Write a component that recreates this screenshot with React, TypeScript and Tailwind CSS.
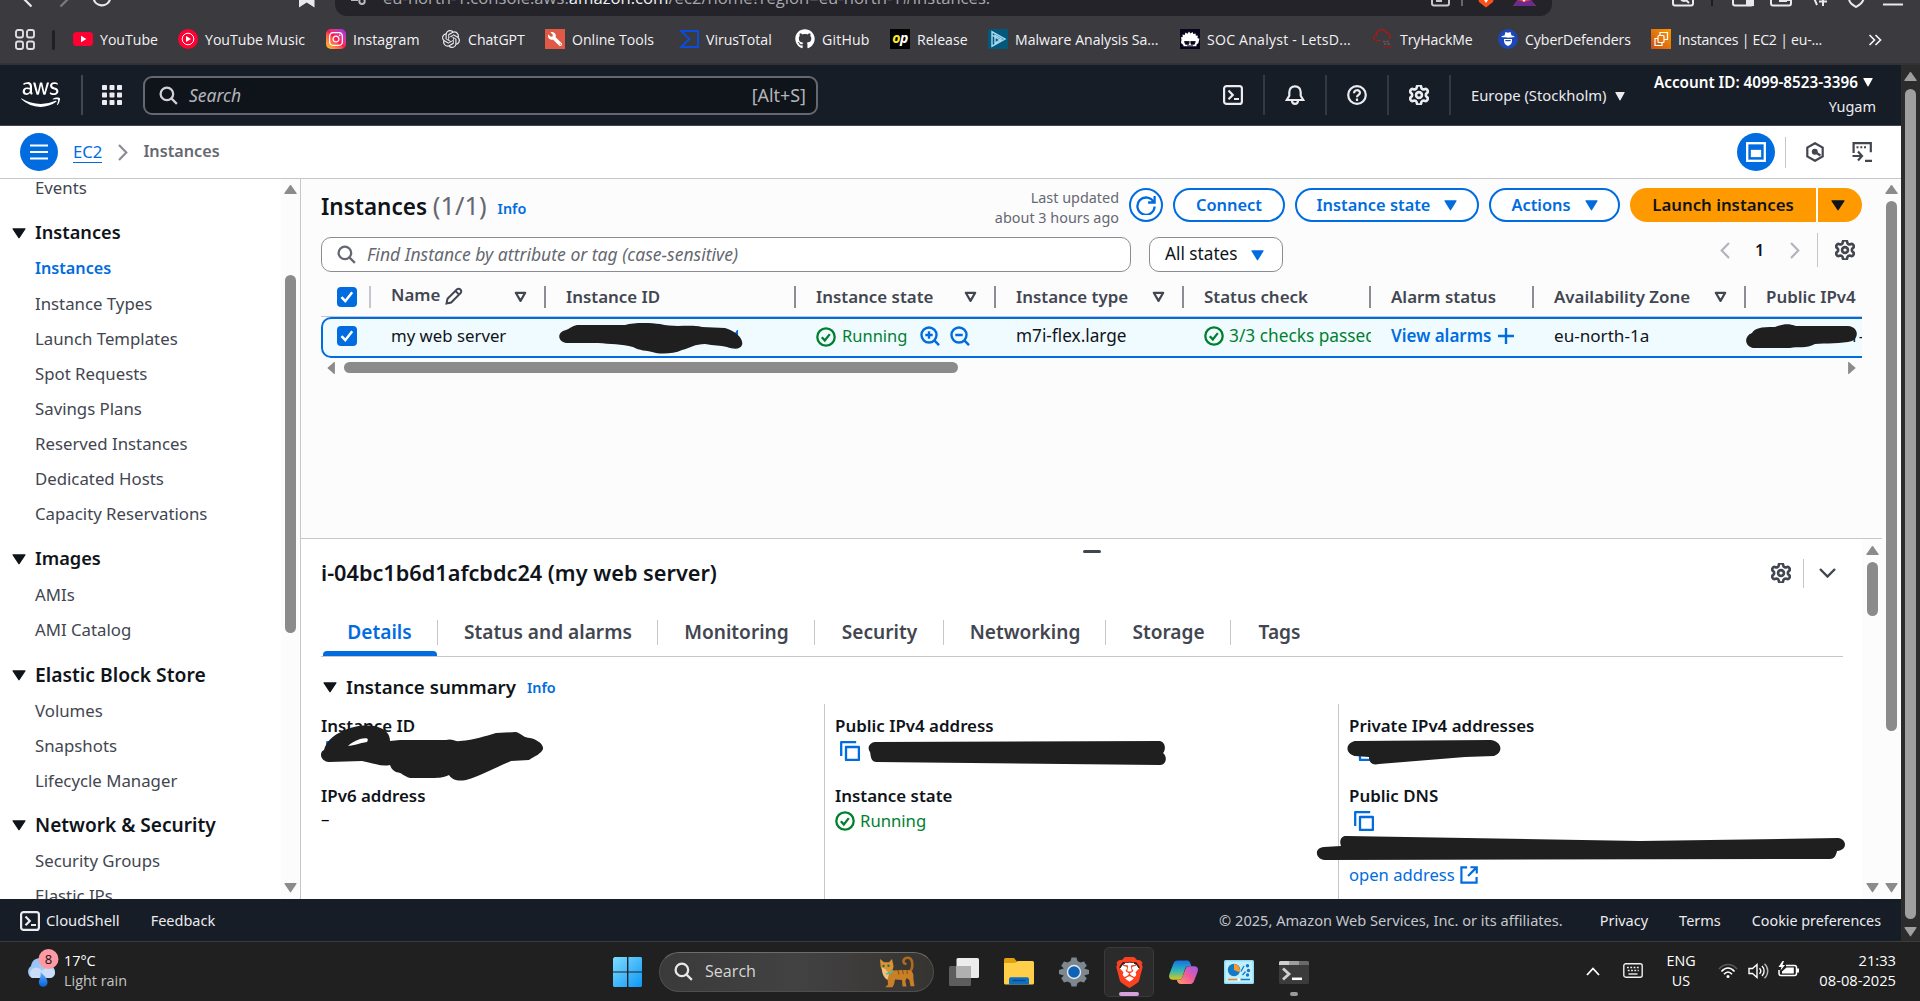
import React from 'react';
import { Settings } from 'lucide-react';
import { FaAws, FaWrench, FaGithub, FaInstagram } from 'react-icons/fa';
import { SiOpenai, SiBrave } from 'react-icons/si';

const AWS_FONT = "font-['Noto_Sans',sans-serif]";
const WIN_FONT = "font-['Open_Sans',sans-serif]";
const INK = '#1f1f1f';

/* ---------- shared bits ---------- */

function Tri({ className = '', dir = 'down' }: { className?: string; dir?: 'up' | 'down' | 'left' | 'right' }) {
  const d = {
    down: 'M1 1.2h10a.6.6 0 0 1 .5 1L6.5 11a.6.6 0 0 1-1 0L.5 2.2a.6.6 0 0 1 .5-1z',
    up: 'M1 11h10a.8.8 0 0 0 .6-1.2L6.7 1.6a.9.9 0 0 0-1.4 0L.4 9.8A.8.8 0 0 0 1 11z',
    left: 'M9.5.5v11a.6.6 0 0 1-1 .4L1 6.5a.6.6 0 0 1 0-1L8.500 .1a.6.6 0 0 1 1 .4z',
    right: 'M2.500.5v11a.6.6 0 0 0 1 .4L11 6.500a.6.6 0 0 0 0-1L3.500.1a.6.6 0 0 0-1 .4z',
  }[dir];
  return (
    <svg viewBox="0 0 12 12" preserveAspectRatio="none" className={`shrink-0 ${className}`} fill="currentColor">
      <path d={d} />
    </svg>
  );
}

function SortTri({ className = '' }: { className?: string }) {
  return (
    <svg viewBox="0 0 13 12" className={`h-3 w-[13px] shrink-0 text-[#424650] ${className}`} fill="none" stroke="currentColor" strokeWidth="2.2" strokeLinejoin="round">
      <path d="M1.800 1.800h9.400L6.500 9.900z" />
    </svg>
  );
}

function SearchIcon({ className = '' }: { className?: string }) {
  return (
    <svg viewBox="0 0 20 20" className={`shrink-0 ${className}`} fill="none" stroke="currentColor" strokeWidth="2.4">
      <circle cx="8.300" cy="8.300" r="6.600" />
      <path d="M13 13l5.800 5.800" />
    </svg>
  );
}

function Gear({ className = '' }: { className?: string }) {
  return (
    <svg viewBox="0 0 20 20" className={`shrink-0 ${className}`} fill="none" stroke="currentColor">
      <g transform="translate(-1.700 -1.700) scale(.975)">
        <Settings size={24} strokeWidth={2.700} />
      </g>
    </svg>
  );
}

function ShellIcon({ className = '' }: { className?: string }) {
  return (
    <svg viewBox="0 0 20 20" className={`size-5 shrink-0 ${className}`} fill="none" stroke="currentColor" strokeWidth="2.200">
      <rect x="1.100" y="1.100" width="17.800" height="17.800" rx="2.500" />
      <path d="M5.500 5.500l4.300 4.400-4.300 4.400M11 14h5" />
    </svg>
  );
}

function CheckBox() {
  return (
    <span className="flex size-5 shrink-0 items-center justify-center rounded-[4px] bg-[#006ce0]">
      <svg viewBox="0 0 20 20" className="size-5" fill="none" stroke="#fff" strokeWidth="2.500">
        <path d="M4.500 10.200l3.800 4L15.200 5.300" />
      </svg>
    </span>
  );
}

function OkIcon() {
  return (
    <svg viewBox="0 0 20 20" className="size-5 shrink-0" fill="none" stroke="currentColor" strokeWidth="2.300">
      <circle cx="10" cy="10" r="8.700" />
      <path d="M5.800 10.200l3 3.200 5-6.300" />
    </svg>
  );
}

function ZoomIcon({ plus = false }: { plus?: boolean }) {
  return (
    <svg viewBox="0 0 20 20" className="size-5 shrink-0 text-[#006ce0]" fill="none" stroke="currentColor" strokeWidth="2.400">
      <circle cx="9" cy="9" r="7.500" />
      <path d="M14.300 14.300l4.700 4.900M5.300 9h7.400" />
      {plus && <path d="M9 5.300v7.400" />}
    </svg>
  );
}

function CopyIcon() {
  return (
    <svg viewBox="0 0 20 20" className="size-5 shrink-0 text-[#006ce0]" fill="none" stroke="currentColor" strokeWidth="2.300" strokeLinejoin="round">
      <path d="M1.200 15V1.200h15" />
      <rect x="6" y="6" width="12.900" height="12.900" />
    </svg>
  );
}

/* Vertical scrollbar: arrow, thumb placed by the flow, arrow at the foot. */
function VScroll({ className, thumb, color = 'text-[#8b8b8b]' }: { className: string; thumb: string; color?: string }) {
  return (
    <div className={`flex shrink-0 flex-col items-center ${color} ${className}`}>
      <Tri dir="up" className="h-[11px] w-[13px]" />
      <div className={`w-[11px] rounded-full bg-current ${thumb}`} />
      <Tri dir="down" className="mt-auto h-[11px] w-[13px]" />
    </div>
  );
}

/* ---------- browser chrome ---------- */

function UrlBar() {
  return (
    <div className={`flex h-4 shrink-0 overflow-hidden bg-[#3b3a3f] text-[#e9e8ec] ${WIN_FONT}`}>
      <svg viewBox="0 0 335 16" className="h-4 w-[335px]" fill="none" stroke="currentColor" strokeWidth="2.200">
        <path d="M24 -1l7.500 7.500" />
        <path d="M68 -1l-7.500 7.500" stroke="#7b7a80" />
        <path d="M93.500 -2a8.500 8.500 0 0 0 16.500 1.500" />
        <path d="M299 -4h15.500V7.500L306.700 2.500 299 7.500z" fill="currentColor" stroke="none" />
      </svg>
      <div className="flex h-4 w-[1217px] items-start rounded-b-xl bg-[#242329] pl-4">
        <svg viewBox="0 0 16 16" className="h-4 w-4" fill="none" stroke="#b9b8bd" strokeWidth="2">
          <path d="M-1 0h8" />
          <circle cx="11" cy="1.200" r="2.700" />
        </svg>
        <div className="-mt-[14px] ml-4 w-[1048px] whitespace-nowrap text-[16.650px] leading-[24px] text-[#a9a8ae]">
          eu-north-1.console.aws.<span className="text-[#f2f2f4]">amazon.com</span>/ec2/home?region=eu-north-1#Instances:
        </div>
        <svg viewBox="0 0 112 16" className="h-4 w-[112px]" fill="none" stroke="#c9c8cd" strokeWidth="2">
          <path d="M1 0v3.500a2 2 0 0 0 2 2h13a2 2 0 0 0 2-2V0M5 1h6" />
          <path d="M31 0v6" stroke="#68676d" />
          <path d="M46 -6h18l-2 8-7 5.500L48 2z" fill="#fb4f1c" stroke="none" />
          <path d="M53 0l2 3 2-3z" fill="#fff" stroke="none" />
          <path d="M93 -8l12 14H82z" fill="#fb3f3f" stroke="none" />
          <path d="M82 6l5-6 6 2 7-2 5 6z" fill="#6a2c8c" stroke="none" />
          <path d="M90 -2h6l-3 4z" fill="#fff" stroke="none" />
        </svg>
      </div>
      <svg viewBox="0 0 368 16" className="h-4 w-[368px]" fill="none" stroke="currentColor" strokeWidth="2">
        <path d="M121 0v3.500a2 2 0 0 0 2 2h16a2 2 0 0 0 2-2V0M129 -1a3 3 0 0 0 5 1l3 3" />
        <path d="M160 0v6" stroke="#1c1b1f" />
        <path d="M181 0v3.500a2 2 0 0 0 2 2h16a2 2 0 0 0 2-2V0" />
        <path d="M195 0h6v5h-6z" fill="currentColor" />
        <path d="M219 0v3.500a2 2 0 0 0 2 2h16a2 2 0 0 0 2-2V0h-5v1h-7" />
        <path d="M262 -2l3 7M271 -2v8M267 1.500h8" />
        <path d="M297 -1c.5 4 3 5.500 7 8 4-2.500 7-4 7.500-8" />
        <path d="M331 4.500h20" />
      </svg>
    </div>
  );
}

const bookmarks: { label: string; w: string; icon: React.ReactNode }[] = [
  { label: 'YouTube', w: 'w-[105px]', icon: (
    <svg viewBox="0 0 20 20" className="size-5"><rect y="3" width="20" height="14" rx="3.500" fill="#ff0033" /><path d="M8 6.800v6.400l5.300-3.200z" fill="#fff" /></svg>) },
  { label: 'YouTube Music', w: 'w-[148px]', icon: (
    <svg viewBox="0 0 20 20" className="size-5"><circle cx="10" cy="10" r="10" fill="#ff0033" /><circle cx="10" cy="10" r="5.800" fill="none" stroke="#fff" strokeWidth="1" /><path d="M8 6.900v6.200l5-3.100z" fill="#fff" /></svg>) },
  { label: 'Instagram', w: 'w-[115px]', icon: (
    <span className="flex size-5 items-center justify-center rounded-[5px] bg-linear-to-tr from-[#ffc800] via-[#ff1450] to-[#9a10f0] text-white"><FaInstagram size={16} /></span>) },
  { label: 'ChatGPT', w: 'w-[104px]', icon: <SiOpenai size={18} color="#e8e8ea" /> },
  { label: 'Online Tools', w: 'w-[134px]', icon: (
    <span className="flex size-5 items-center justify-center bg-[#e05846] text-white"><FaWrench size={14} className="-scale-x-100" /></span>) },
  { label: 'VirusTotal', w: 'w-[116px]', icon: (
    <svg viewBox="0 0 20 20" className="size-5" fill="none" stroke="#0b4ddb" strokeWidth="2"><path d="M2.200 2h16.800v16H2.200l8.300-8z" /></svg>) },
  { label: 'GitHub', w: 'w-[95px] tracking-[0.200px]', icon: <FaGithub size={20} color="#fff" /> },
  { label: 'Release', w: 'w-[98px]', icon: (
    <span className="flex size-5 items-center justify-center bg-black pb-0.5 text-[14px] font-bold leading-none tracking-[-0.5px] text-white italic"><span className="text-[#ffe924]">o</span>p</span>) },
  { label: 'Malware Analysis Sa...', w: 'w-[192px]', icon: (
    <svg viewBox="0 0 20 20" className="size-5" fill="none" stroke="#a8dcf2" strokeWidth="1.400"><rect width="20" height="20" rx="2" fill="#04587c" stroke="none" /><path d="M4 2.800v14.400L17 10zM7 6.500v7.500l6.500-4zM4 6l9.500 6" /></svg>) },
  { label: 'SOC Analyst - LetsD...', w: 'w-[193px] tracking-[0.220px]', icon: (
    <svg viewBox="0 0 20 20" className="size-5"><rect width="20" height="20" fill="#070519" /><path d="M1 14l.5-4L.7 8.500l2-.6L2.500 5.500l2.200.4L5.500 3.500l2 1.300L9 2.500l1.500 2 2-1.500.8 2 2.300-.6.2 2.200 2.200.2-.6 2.200 2 .8-1 4.200-2 1.800v1.500h-13V16z" fill="#fff" /><path d="M4.500 12.500h4.300v2.800H5.500zM11 12.500h4.300l-1 2.800H11zM8.500 13h3M7 16.800h6" fill="#070519" stroke="#070519" strokeWidth=".8" /></svg>) },
  { label: 'TryHackMe', w: 'w-[125px] tracking-[-0.100px]', icon: (
    <svg viewBox="0 0 20 20" className="size-5" fill="none" stroke="#c11111" strokeWidth="1.200"><path d="M8 11.500H3.500C-.5 10.500.5 6 3.500 6 3.500 0 11.500-1 13 3.500c4 0 5.500 5 2.500 6.500" /><path d="M10 12.500h7M11 15h6" stroke="#5c5a60" strokeDasharray="2.500 1" strokeWidth="1.500" /><path d="M10.500 18h8" stroke="#8a1c22" strokeDasharray="2 1" strokeWidth="1.800" /></svg>) },
  { label: 'CyberDefenders', w: 'w-[153px] tracking-[-0.050px]', icon: (
    <svg viewBox="0 0 20 20" className="size-5"><circle cx="10" cy="10" r="10" fill="#1c47b8" /><path d="M6.500 6.500l1-3.500 2.500.7 2.500-.7 1 3.500c2 .3 3 .7 3 1.300 0 1.100-13 1.100-13 0 0-.6 1-1 3-1.300z" fill="#fff" /><path d="M6 10h8v1.800c0 3-2 4.700-4 5.200-2-.5-4-2.200-4-5.200z" fill="#fff" /><path d="M7.300 11h5.400v1.200H7.300z" fill="#1c47b8" /></svg>) },
  { label: 'Instances | EC2 | eu-...', w: 'w-[217px] tracking-[-0.220px]', icon: (
    <svg viewBox="0 0 20 20" className="size-5" fill="none" stroke="#fff" strokeWidth="1.200"><defs><linearGradient id="ec2" x1="0" y1="1" x2="1" y2="0"><stop offset="0" stopColor="#c8511b" /><stop offset="1" stopColor="#ff9900" /></linearGradient></defs><rect width="20" height="20" fill="url(#ec2)" stroke="none" /><path d="M7 9.500H4v7h7v-3M9 6V3.500h7.500v7H13" /><rect x="7" y="6.500" width="6" height="7" rx="1" /></svg>) },
];

function BookmarkBar() {
  return (
    <div className={`flex h-[49px] shrink-0 items-center border-b-2 border-[#323136] bg-[#3b3a3f] pl-[15px] text-[14.100px] text-[#f3f3f5] ${WIN_FONT}`}>
      <svg viewBox="0 0 20 21" className="h-[21px] w-5" fill="none" stroke="#dedde2" strokeWidth="1.900">
        <rect x="1" y="1" width="7" height="7.500" rx="2" />
        <rect x="12" y="1" width="7" height="7.500" rx="2" />
        <rect x="1" y="12.500" width="7" height="7.500" rx="2" />
        <rect x="12" y="12.500" width="7" height="7.500" rx="2" />
      </svg>
      <span className="mr-[18px] ml-[17px] h-5 w-[3px] rounded bg-[#202024]" />
      {bookmarks.map((b) => (
        <div key={b.label} className={`flex shrink-0 items-center gap-[7px] whitespace-nowrap ${b.w}`}>
          <span className="flex size-5 shrink-0 items-center justify-center">{b.icon}</span>
          {b.label}
        </div>
      ))}
      <svg viewBox="0 0 14 12" className="h-3 w-[14px]" fill="none" stroke="#f3f3f5" strokeWidth="1.700">
        <path d="M1.500 1l5 5-5 5M7.500 1l5 5-5 5" />
      </svg>
    </div>
  );
}

/* ---------- AWS console ---------- */

function ConsoleHeader() {
  return (
    <header className="flex h-[61px] shrink-0 items-center border-b border-[#424650] bg-[#161d26] text-[#ebebf0]">
      <FaAws preserveAspectRatio="none" className="-mt-px ml-[21px] h-[33px] w-[39px] shrink-0 text-white" />
      <span className="ml-[21px] h-10 w-0.5 bg-[#424650]" />
      <svg viewBox="0 0 20 20" className="ml-[19px] size-5 shrink-0" fill="currentColor">
        {[0, 7.500, 15].map((y) => [0, 7.500, 15].map((x) => <rect key={`${x}-${y}`} x={x} y={y} width="5" height="5" rx=".8" />))}
      </svg>
      <div className="ml-[21px] flex h-[39px] w-[675px] items-center rounded-[9px] border-2 border-[#656871] bg-[#0f141a] px-3.5 text-[17.500px] text-[#b4b4bb]">
        <SearchIcon className="size-[19px] text-[#d0d0d6]" />
        <span className="ml-[11px] italic">Search</span>
        <span className="mr-[-4px] ml-auto text-[17.900px]">[Alt+S]</span>
      </div>
      <ShellIcon className="ml-[405px]" />
      <span className="ml-5 h-10 w-0.5 bg-[#333843]" />
      <svg viewBox="0 0 20 20" className="ml-5 size-5" fill="none" stroke="currentColor" strokeWidth="2.200">
        <path d="M10 1.300c-3.600 0-5.700 2.600-5.700 5.900v3.600L1.700 15h16.600l-2.600-4.200V7.200c0-3.300-2.100-5.900-5.700-5.900z" />
        <path d="M7 15.500c0 4.500 6 4.500 6 0" />
      </svg>
      <span className="ml-5 h-10 w-0.5 bg-[#333843]" />
      <svg viewBox="0 0 20 20" className="ml-5 size-5" fill="none" stroke="currentColor" strokeWidth="2.200">
        <circle cx="10" cy="10" r="8.800" />
        <path d="M7 8.300c0-4 6-4 6-.6 0 2-3 2.200-3 4.500M10 13.500V16" />
      </svg>
      <span className="ml-5 h-10 w-0.5 bg-[#333843]" />
      <Gear className="ml-5 size-5" />
      <span className="ml-5 h-10 w-0.5 bg-[#333843]" />
      <div className="ml-5 flex w-[183px] items-center whitespace-nowrap pt-px text-[14.800px]">
        Europe (Stockholm)
        <Tri className="ml-[9px] h-[10px] w-[10px]" />
      </div>
      <div className="mt-[-3px] flex w-[220px] flex-col items-end text-[14.500px] leading-[24px] whitespace-nowrap">
        <div className="flex items-center pr-px text-[15.250px] font-semibold text-white">
          Account ID: 4099-8523-3396
          <Tri className="ml-[5px] h-[10px] w-[10px]" />
        </div>
        <span className="mr-[-2px]">Yugam</span>
      </div>
    </header>
  );
}

function Breadcrumbs() {
  return (
    <div className="flex h-[53px] shrink-0 items-center border-b border-[#c6c6cd] bg-white">
      <span className="ml-5 flex size-[38px] items-center justify-center rounded-full bg-[#006ce0]">
        <svg viewBox="0 0 18 18" className="size-[18px]" stroke="#fff" strokeWidth="2.200"><path d="M0 2.500h18M0 9h18M0 15.500h18" /></svg>
      </span>
      <span className="-mt-px ml-[15px] border-b border-[#006ce0] text-[16.700px] leading-[21px] text-[#006ce0]">EC2</span>
      <svg viewBox="0 0 10 17" className="ml-4 h-[17px] w-[10px]" fill="none" stroke="#8c8c94" strokeWidth="2.200"><path d="M1 1l7.300 7.500L1 16" /></svg>
      <span className="-mt-0.5 ml-[15px] text-[16.200px] font-semibold text-[#656871]">Instances</span>
      <span className="ml-auto flex size-[38px] items-center justify-center rounded-full bg-[#006ce0]">
        <svg viewBox="0 0 20 20" className="size-5" fill="none" stroke="#fff" strokeWidth="2.300"><rect x="1.200" y="1.200" width="17.600" height="17.600" /><rect x="6" y="9" width="8" height="5" fill="#fff" /></svg>
      </span>
      <span className="ml-2.5 h-[31px] w-px bg-[#c6c6cd]" />
      <svg viewBox="0 0 20 20" className="ml-[19px] size-5" fill="none" stroke="#424650" strokeWidth="2.200"><path d="M10 1.200l7.700 4.400v8.800L10 18.800l-7.700-4.400V5.600z" /><circle cx="9.800" cy="9.800" r="1.900" fill="#424650" /><path d="M10 10l5.500 3.500" strokeWidth="2.300" /></svg>
      <svg viewBox="0 0 20 20" className="mr-[29px] ml-[27px] size-5" fill="none" stroke="#424650" strokeWidth="2.200"><path d="M1.600 11V1.200h17.200v9M.5 14h9M6 9.500l4 4.500-4 4.500M13 18.800h7" /><path d="M4.500 5.200h2M8.300 5.200h2M12 5.200h2" strokeWidth="2" /></svg>
    </div>
  );
}

const nav: { head?: string; size?: string; items: string[] }[] = [
  { items: ['Events'] },
  { head: 'Instances', size: 'text-[18.200px]', items: ['Instances', 'Instance Types', 'Launch Templates', 'Spot Requests', 'Savings Plans', 'Reserved Instances', 'Dedicated Hosts', 'Capacity Reservations'] },
  { head: 'Images', size: 'text-[18.200px]', items: ['AMIs', 'AMI Catalog'] },
  { head: 'Elastic Block Store', size: 'text-[19.300px]', items: ['Volumes', 'Snapshots', 'Lifecycle Manager'] },
  { head: 'Network & Security', size: 'text-[19.100px]', items: ['Security Groups', 'Elastic IPs'] },
];

function Sidebar() {
  return (
    <aside className="flex w-[301px] shrink-0 border-r border-[#c6c6cd] bg-white">
      <nav className="h-[720px] flex-1 overflow-hidden whitespace-nowrap">
        <div className="-mt-[9px]">
          {nav.map((g, i) => (
            <div key={i} className={i === 3 ? 'mb-[9px]' : 'mb-2.5'}>
              {g.head && (
                <div className={`flex h-9 items-center pl-3 font-semibold text-[#0f141a] ${g.size}`}>
                  <Tri className="mr-[9px] h-3 w-[14px]" />
                  {g.head}
                </div>
              )}
              {g.items.map((t) => (
                <div key={t} className={t === g.head ? 'flex h-[35px] items-center pl-[35px] text-[16.200px] font-semibold text-[#006ce0]' : 'flex h-[35px] items-center pl-[35px] text-[16.800px] text-[#424650]'}>
                  {t}
                </div>
              ))}
            </div>
          ))}
        </div>
      </nav>
      <VScroll className="w-[19px] bg-[#fcfcfc] pt-[5px] pb-[6px]" thumb="mt-20 h-[358px]" />
    </aside>
  );
}

const btn = 'flex h-[34px] items-center justify-center rounded-full border-2 border-[#006ce0] bg-white text-[16.400px] font-semibold text-[#006ce0] whitespace-nowrap';

const columns: { label: string; sort?: boolean; edit?: boolean }[] = [
  { label: 'Name', sort: true, edit: true },
  { label: 'Instance ID' },
  { label: 'Instance state', sort: true },
  { label: 'Instance type', sort: true },
  { label: 'Status check' },
  { label: 'Alarm status' },
  { label: 'Availability Zone', sort: true },
  { label: 'Public IPv4' },
];

const gridCols = 'grid grid-cols-[50px_175px_250px_200px_188px_187px_163px_212px_116px]';

function InstanceTable() {
  return (
    <div className="relative w-[1541px] overflow-hidden text-[17px] whitespace-nowrap">
      <div className={`${gridCols} h-[45px] items-center border-b border-[#c6c6cd] pt-[5px] text-[16.900px] font-semibold text-[#424650]`}>
        <div className="flex h-[22px] items-center justify-between border-r-2 border-[#c6c6cd] pl-4"><CheckBox /></div>
        {columns.map((c, i) => (
          <div key={c.label} className={`flex h-[22px] items-center pl-5 ${i < 7 ? 'border-r-2 border-[#8c8c94]' : ''}`}>
            <span className={c.edit ? '-mt-[3px]' : ''}>{c.label}</span>
            {c.edit && (
              <svg viewBox="0 0 18 18" className="-mt-px ml-[5px] size-[18px]" fill="none" stroke="currentColor" strokeWidth="2"><path d="M1.500 16.500l1-4.700L12 2.300c2.500-1.800 5.300 1 3.700 3.700L6.200 15.500zM10.500 4l3.600 3.600" /></svg>
            )}
            {c.sort && <SortTri className="mr-[17px] ml-auto" />}
          </div>
        ))}
      </div>
      <div className={`${gridCols} h-[41px] w-[1560px] items-center rounded-[10px] border-2 border-[#006ce0] bg-[#f0fbff] pb-[3px] text-[16.900px] text-[#0f141a]`}>
        <div className="pl-3.5"><CheckBox /></div>
        <div className="pl-[18px] text-[16.800px]">my web server</div>
        <div />
        <div className="mt-px flex items-center pl-[18px] text-[16.500px] text-[#00802f]">
          <OkIcon /><span className="ml-[6px]">Running</span>
          <span className="-mt-px ml-[13px] flex gap-2.5"><ZoomIcon plus /><ZoomIcon /></span>
        </div>
        <div className="pl-[18px] text-[17.200px]">m7i-flex.large</div>
        <div className="flex items-center pl-[18px] text-[#00802f]">
          <OkIcon /><span className="ml-[5px] w-[142px] overflow-hidden text-[17.300px]">3/3 checks passed</span>
        </div>
        <div className="flex items-center pl-[18px] text-[17px] font-semibold text-[#006ce0]">
          View alarms
          <svg viewBox="0 0 16 16" className="ml-[7px] size-4" stroke="currentColor" strokeWidth="2.400"><path d="M0 8h16M8 0v16" /></svg>
        </div>
        <div className="pl-[18px] text-[17.100px]">eu-north-1a</div>
        <div className="pl-[101px]">1-</div>
      </div>
      <svg viewBox="559 322 185 33" className="absolute top-[50px] left-[238px] h-[33px] w-[185px]">
        <path d="M733 336h5v-6h-1z" fill="#006ce0" />
        <path d="M566 330C569 329 572 326 577 325L625 325C635 322 652 323 660 324C675 328 690 324 702 327L725 328C736 331 744 339 742 345C740 350 733 349 727 347C720 345 714 346 705 344C695 344 690 348 682 350C674 354 662 354 656 353C645 350 640 351 633 347C622 344 610 344 598 343L566 343C557 341 557 332 566 330Z" fill={INK} />
      </svg>
      <svg viewBox="1745 322 115 30" className="absolute top-[50px] left-[1424px] h-[30px] w-[115px]">
        <path d="M1752 333C1755 328 1760 327 1775 327C1783 324 1788 323 1796 326L1848 326C1859 327 1859 338 1852 341C1842 344 1825 343 1815 344C1806 349 1798 346 1790 348L1753 348C1744 346 1744 336 1752 333Z" fill={INK} />
      </svg>
    </div>
  );
}

function InstancesPanel() {
  return (
    <section className="h-[359px] w-[1579px] overflow-hidden bg-[#fcfcfd] pl-5">
      <div className="mt-[9px] flex h-[34px] w-[1541px] items-center whitespace-nowrap">
        <h1 className="text-[22.500px] font-semibold text-[#0f141a]">
          Instances <span className="text-[25.400px] font-normal text-[#656871]">(1/1)</span>
        </h1>
        <span className="mt-2 ml-[11px] text-[14.400px] font-semibold text-[#006ce0]">Info</span>
        <div className="mt-[6px] ml-auto text-right text-[14.400px] leading-5 text-[#656871]">Last updated<br />about 3 hours ago</div>
        <span className="ml-[10px] flex size-[34px] items-center justify-center rounded-full border-2 border-[#006ce0] bg-white">
          <svg viewBox="0 0 20 20" className="size-5" fill="none" stroke="#006ce0" strokeWidth="2.300"><path d="M17.800 7.500A8.600 8.600 0 1 0 18.600 11.500M18.600 1v6.500h-6.500" /></svg>
        </span>
        <span className={`ml-2.5 w-[112px] ${btn}`}>Connect</span>
        <span className={`ml-2.5 w-[184px] ${btn}`}>Instance state<Tri className="ml-[14px] h-3 w-[13px]" /></span>
        <span className={`ml-2.5 w-[131px] ${btn}`}>Actions<Tri className="ml-[14px] h-3 w-[13px]" /></span>
        <span className="ml-2.5 flex h-[34px] w-[186px] items-center justify-center rounded-l-full bg-[#ff9900] text-[16.800px] font-semibold text-[#0f141a]">Launch instances</span>
        <span className="ml-0.5 flex h-[34px] w-11 items-center rounded-r-full bg-[#ff9900] pl-[13px] text-[#0f141a]"><Tri className="h-3 w-[14px]" /></span>
      </div>
      <div className="mt-[15px] flex h-[35px] w-[1541px] items-center text-[17px]">
        <div className="flex h-[35px] w-[810px] items-center rounded-[10px] border border-[#8c8c94] bg-white pl-[15px] text-[17.550px] text-[#656871] italic">
          <SearchIcon className="mr-[11px] size-[19px]" />
          Find Instance by attribute or tag (case-sensitive)
        </div>
        <div className="ml-[18px] flex h-[35px] w-[134px] items-center rounded-[10px] border border-[#8c8c94] bg-white pl-[15px] text-[17.200px] text-[#0f141a]">
          <span className="-mt-0.5">All states</span>
          <Tri className="ml-[13px] h-3 w-[13px] text-[#006ce0]" />
        </div>
        <div className="mt-[-9px] ml-auto flex items-center">
          <svg viewBox="0 0 10 17" className="h-[17px] w-[10px]" fill="none" stroke="#b4b4bb" strokeWidth="2.200"><path d="M9 1L1.700 8.500 9 16" /></svg>
          <span className="w-[60px] pr-px text-center text-[16px] font-semibold text-[#0f141a]">1</span>
          <svg viewBox="0 0 10 17" className="h-[17px] w-[10px]" fill="none" stroke="#b4b4bb" strokeWidth="2.200"><path d="M1 1l7.300 7.500L1 16" /></svg>
          <span className="ml-[17px] h-[34px] w-px bg-[#c6c6cd]" />
          <Gear className="mr-[7px] ml-[17px] size-5 text-[#424650]" />
        </div>
      </div>
      <InstanceTable />
      <div className="mt-1 flex h-[11px] w-[1541px] items-center pr-1.5 pl-1.5 text-[#8b8b8b]">
        <Tri dir="left" className="h-3 w-[10px]" />
        <div className="ml-[7px] h-[11px] w-[614px] rounded-full bg-current" />
        <Tri dir="right" className="ml-auto h-3 w-[10px]" />
      </div>
    </section>
  );
}

const tabs: { t: string; w: string }[] = [
  { t: 'Details', w: 'w-[117px]' },
  { t: 'Status and alarms', w: 'w-[220px]' },
  { t: 'Monitoring', w: 'w-[157px]' },
  { t: 'Security', w: 'w-[129px]' },
  { t: 'Networking', w: 'w-[162px]' },
  { t: 'Storage', w: 'w-[125px]' },
  { t: 'Tags', w: 'w-[97px]' },
];

const fieldLabel = 'text-[16.900px] leading-[24px] font-semibold text-[#0f141a]';

function DetailPanel() {
  return (
    <section className="flex h-[361px] w-[1581px] border-t border-[#c6c6cd] bg-white">
      <div className="w-[1561px] overflow-hidden pl-5 whitespace-nowrap">
        <div className="mt-[11px] ml-[762px] h-[3px] w-[18px] rounded bg-[#424650]" />
        <div className="mt-[3px] flex h-[34px] items-center pr-[26px]">
          <h2 className="text-[21.700px] font-semibold text-[#0f141a]">i-04bc1b6d1afcbdc24 (my web server)</h2>
          <Gear className="ml-auto size-5 text-[#424650]" />
          <span className="mx-3 h-[29px] w-px bg-[#c6c6cd]" />
          <svg viewBox="0 0 17 10" className="ml-[3px] h-[10px] w-[17px]" fill="none" stroke="#424650" strokeWidth="2.400"><path d="M1 1l7.500 7.500L16 1" /></svg>
        </div>
        <div className="mt-[18px] flex h-[49px] w-[1522px] items-center border-b border-[#c6c6cd] text-[19.100px] font-semibold text-[#424650]">
          {tabs.map((t, i) => (
            <div key={t.t} className={`relative flex h-[48px] items-center justify-center ${t.w} ${i === 0 ? 'text-[#006ce0]' : ''}`}>
              <span>{t.t}</span>
              {i === 0 && <span className="absolute bottom-0 left-0.5 h-[5px] w-[114px] rounded-t bg-[#006ce0]" />}
              {i < 6 && <span className="absolute right-0 top-3 h-[25px] w-px bg-[#c6c6cd]" />}
            </div>
          ))}
        </div>
        <div className="mt-[17px] flex h-[26px] items-center text-[18.700px] font-semibold text-[#0f141a]">
          <Tri className="mr-[9px] ml-[2px] h-3 w-[14px]" />
          Instance summary
          <span className="mt-0.5 ml-[11px] text-[14.400px] font-semibold text-[#006ce0]">Info</span>
        </div>
        <div className="relative mt-[4px] grid h-[196px] grid-cols-[504px_514px_523px] text-[16.900px]">
          <div className="border-r border-[#c6c6cd] pt-[10px]">
            <div className={fieldLabel}>Instance ID</div>
            <div className="mt-[3px] flex h-5 pl-[5px]"><CopyIcon /></div>
            <div className={`mt-[23px] ${fieldLabel}`}>IPv6 address</div>
            <div className="-mt-0.5 leading-[26px]">–</div>
          </div>
          <div className="border-r border-[#c6c6cd] pt-[10px] pl-[10px]">
            <div className={fieldLabel}>Public IPv4 address</div>
            <div className="mt-[3px] flex h-5 pl-[5px]"><CopyIcon /></div>
            <div className={`mt-[23px] ${fieldLabel}`}>Instance state</div>
            <div className="flex items-center gap-[5px] leading-[26px] text-[16.700px] text-[#00802f]"><OkIcon />Running</div>
          </div>
          <div className="pt-[10px] pl-[10px]">
            <div className={fieldLabel}>Private IPv4 addresses</div>
            <div className="mt-[3px] flex h-5 pl-[5px]"><CopyIcon /></div>
            <div className={`mt-[23px] ${fieldLabel}`}>Public DNS</div>
            <div className="mt-[3px] flex h-5 pl-[5px]"><CopyIcon /></div>
            <div className="mt-[31px] flex items-center text-[16.600px] leading-[26px] text-[#006ce0]">
              open address
              <svg viewBox="0 0 19 19" className="ml-[5px] size-[18px]" fill="none" stroke="currentColor" strokeWidth="2.300"><path d="M7.500 1.500H1.500v16h16v-6M11 1.300h6.700V8M17 2L8.500 10.500" /></svg>
            </div>
          </div>
          <svg viewBox="318 704 1530 160" className="absolute top-0 left-[-3px] h-40 w-[1530px]" fill={INK}>
            <path fillRule="evenodd" d="M324 750C326 742 333 735 343 731C352 726 368 724 378 727C387 730 390 735 390 741L400 740L446 740C452 738 455 742 460 741C475 740 485 736 496 733L516 732C522 734 524 738 530 738C536 739 544 744 543 749C541 754 535 756 529 760L511 761C497 767 480 776 466 780C455 782 451 778 449 775C443 778 437 778 430 778L410 778C403 776 403 773 396 772C391 769 391 767 390 765C381 767 373 763 362 761L329 762C320 761 319 752 324 750ZM348 746C352 746 360 743 367 742C370 737 364 738 360 739C354 741 350 744 348 746Z" />
            <path d="M875 742L1160 741C1167 743 1165 752 1163 753C1168 757 1166 765 1160 765L876 762C870 761 871 755 870 752C867 748 869 743 875 742Z" />
            <path d="M1355 741L1491 740C1503 742 1503 753 1494 756L1465 757L1379 764C1371 766 1369 761 1369 757L1355 756C1345 754 1345 743 1355 741Z" />
            <path d="M1346 836L1640 841L1838 838C1847 839 1848 850 1837 851C1836 856 1834 859 1830 859L1324 860C1315 858 1314 848 1324 847L1341 846C1339 841 1341 836 1346 836Z" />
          </svg>
        </div>
      </div>
      <VScroll className="w-5 bg-[#fcfcfc] pt-[6px] pl-px pb-[6px]" thumb="mt-[6px] h-[54px]" />
    </section>
  );
}

function ConsoleFooter() {
  return (
    <footer className="flex h-[42px] shrink-0 items-center bg-[#161d26] pt-px pl-5 text-[14.500px] whitespace-nowrap text-[#ebebf0]">
      <ShellIcon />
      <span className="ml-[6px] text-[14.800px]">CloudShell</span>
      <span className="ml-[31px]">Feedback</span>
      <span className="ml-auto text-[14.600px] text-[#c6c6cd]">© 2025, Amazon Web Services, Inc. or its affiliates.</span>
      <span className="ml-[37px]">Privacy</span>
      <span className="ml-[31px]">Terms</span>
      <span className="mr-5 ml-[31px] text-[14.300px]">Cookie preferences</span>
    </footer>
  );
}

/* ---------- taskbar ---------- */

function Taskbar() {
  return (
    <div className={`flex h-[60px] shrink-0 items-center border-t border-[#3c3c3c] bg-[#202020] whitespace-nowrap text-white ${WIN_FONT}`}>
      <div className="flex w-[613px] items-center">
        <svg viewBox="0 0 36 46" className="mt-[-6px] ml-6 h-[46px] w-9">
          <defs>
            <linearGradient id="cloud" x1="0" y1="0" x2="1" y2="1"><stop offset="0" stopColor="#8fc1f7" /><stop offset="1" stopColor="#b7cdf0" /></linearGradient>
            <linearGradient id="drop" x1="0" y1="0" x2="0" y2="1"><stop offset="0" stopColor="#5fb0ff" /><stop offset="1" stopColor="#0a62dc" /></linearGradient>
          </defs>
          <path d="M8 32a7 7 0 0 1-1-12c1-6 5-8 10-8 6 0 9 4 9 8 4 0 5 4 5 6s-2 6-6 6z" fill="url(#cloud)" />
          <path d="M8 32a6 6 0 0 1 0-9c5-3 9 0 10 2 3-4 12-4 13 1 0 4-2 6-6 6z" fill="#c9dcf8" />
          <path d="M16.500 26c5 5 7 7 7 10.500a4.300 4.300 0 0 1-8.600 0c0-3 2.600-6 1.600-10.500z" fill="url(#drop)" />
          <circle cx="24.500" cy="13" r="10" fill="#ff99a4" />
          <text x="24.500" y="17.800" textAnchor="middle" fontSize="13" fill="#111">8</text>
        </svg>
        <div className="mt-[-2px] ml-1 text-[14.400px] leading-5">
          17°C
          <div className="text-[#c4c4c4]">Light rain</div>
        </div>
      </div>
      <svg viewBox="0 0 30 30" className="size-[30px] shrink-0">
        <defs><linearGradient id="win" x1="0" y1="0" x2="1" y2="1"><stop offset="0" stopColor="#7fdcff" /><stop offset="1" stopColor="#0d97f5" /></linearGradient></defs>
        <path d="M1.500 0H14v14.400H0V1.500zM15.400 0h12.800L29 1v13.400H15.400zM0 15.600h14V30H1L0 29zM15.400 15.600H29V29l-1 1H15.400z" fill="url(#win)" />
      </svg>
      <div className="ml-4 flex h-10 w-[275px] shrink-0 items-center rounded-full border border-[#4e4e4e] border-t-[#6d6d6d] bg-linear-to-r from-[#3a3a3a] via-[#434243] to-[#363431] pl-[14px] text-[16.100px] text-[#d6d6d6]">
        <SearchIcon className="mr-[12px] size-[19px] text-[#e8e8e8]" />
        Search
        <svg viewBox="0 0 36 32" className="mr-[18px] ml-auto h-8 w-9">
          <path d="M30 17C35 12 34 2 29 1.800c-5-.2-6 5.500-2.500 6" fill="none" stroke="#b06a1c" strokeWidth="2.600" strokeLinecap="round" />
          <path d="M8 15c6-1 14-1 22-1 4 1 5 5 4.300 8l1.200 8.200h-4L30.300 24l-2.500-2-1.500 3 1.200 5.500h-4L23 24l-7-.5-1 5-1.500 2.700H6.300L9 28.500z" fill="#c87f25" />
          <path d="M1 3l4 3.200h5L13 3l1.500 7c0 3-2 6-5.500 6.500C4 16.500 1.500 13 1.500 9z" fill="#dc9433" />
          <path d="M3 11.500c3 1 5 3 7 6.500l-1.500 6C4.500 22 2.500 16 3 11.500z" fill="#f3c27a" />
          <circle cx="4.500" cy="10" r="1.200" fill="#1f6f63" /><circle cx="9.500" cy="9.800" r="1.200" fill="#1f6f63" />
          <path d="M7 17.500c3 1 5-.5 7-3" fill="none" stroke="#3fc0a9" strokeWidth="1.600" />
          <path d="M19 14l1 4.500M23.500 13.800l.8 4.200M28 14l.3 4" stroke="#8f5414" strokeWidth="1.200" />
        </svg>
      </div>
      <svg viewBox="0 0 30 28" className="ml-[15px] h-7 w-[30px] shrink-0">
        <rect y="8" width="22" height="20" rx="1.500" fill="#5d5d5d" />
        <rect x="7.500" width="22.500" height="20" rx="1.500" fill="#ececec" />
        <path d="M7.500 8H22v12H7.500z" fill="#b0b0b0" />
      </svg>
      <svg viewBox="0 0 30 27" className="ml-[25px] h-[27px] w-[30px] shrink-0">
        <path d="M0 1.500Q0 0 1.500 0H10l3 3.500v5H0z" fill="#e0a010" />
        <path d="M0 5h11l3-2h14.500Q30 3 30 4.500V25q0 1.500-1.500 1.500H1.500Q0 26.500 0 25z" fill="#ffcf4a" />
        <path d="M5 26.500V21q0-1.800 1.800-1.800h16.400q1.800 0 1.800 1.800v5.500z" fill="#0f6fc0" />
        <path d="M8.500 22.500h13" stroke="#064a8b" strokeWidth="1.300" />
      </svg>
      <svg viewBox="0 0 30 30" className="ml-[25px] size-[30px] shrink-0">
        <path d="M11.500 4L12.500.5h5L18.500 4l3 1.600L25 4.500l2.800 4.300-2.600 2.800L30 13v4l-4.800 1.400 2.600 2.800L25 25.500l-3.500-1.100-3 1.600-1 3.500h-5l-1-3.500-3-1.600L5 25.500l-2.800-4.300 2.600-2.800L0 17v-4l4.800-1.400-2.600-2.800L5 4.500l3.500 1.100z" fill="#7d8790" />
        <circle cx="15" cy="15" r="7.200" fill="#e9edf0" /><circle cx="15" cy="15" r="5.800" fill="#0e63b8" />
      </svg>
      <div className="ml-[15px] flex h-[50px] w-[50px] shrink-0 flex-col items-center rounded-[5px] border border-[#3a3a3a] bg-[#2b2b2b] pt-[9px]">
        <SiBrave size={31} color="#fb4120" className="rounded-xl bg-[radial-gradient(white_45%,transparent_46%)]" />
        <span className="mt-[4px] h-1 w-5 rounded-full bg-[#d8a0df]" />
      </div>
      <svg viewBox="0 0 30 26" className="ml-[15px] h-[26px] w-[29px] shrink-0">
        <defs>
          <linearGradient id="cpa" x1="0" y1="0" x2="0" y2="1"><stop offset="0" stopColor="#1a6fe0" /><stop offset=".5" stopColor="#28b5c0" /><stop offset="1" stopColor="#d8c71d" /></linearGradient>
          <linearGradient id="cpb" x1="1" y1="0" x2="0" y2="1"><stop offset="0" stopColor="#9a5cf2" /><stop offset=".5" stopColor="#ee5a9a" /><stop offset="1" stopColor="#ffa063" /></linearGradient>
        </defs>
        <path d="M9 1h9.500c2.500 0 3.500 1.500 4.500 6h-3c-2 0-3 1-3.500 3L14 18c-.6 2-1.500 3-4 3H4c-4 0-4.500-3-3.500-6L4.500 4.500C5.500 2 6.500 1 9 1z" fill="url(#cpa)" />
        <path d="M21 25.500h-8.500c-2.500 0-3.500-1.500-4.500-4.500h2.500c2 0 3-1 3.500-3L17 10c.6-2 1.500-3 4-3h5c4 0 4.500 3 3.500 6L26 22c-.8 2.500-2 3.500-5 3.500z" fill="url(#cpb)" />
      </svg>
      <svg viewBox="0 0 30 24" className="ml-[26px] h-6 w-[30px] shrink-0">
        <rect width="30" height="24" rx="1.500" fill="#8fdcf8" /><rect x="1.500" y="1.500" width="27" height="21" fill="#c2effc" />
        <circle cx="10" cy="10" r="6.200" fill="#1679c6" /><path d="M10 10V3.800a6.200 6.200 0 0 1 5.500 8.500z" fill="#f79a2a" />
        <path d="M17 11.500l3-5.500M18.500 15l3-3.500" stroke="#1679c6" strokeWidth="1.300" fill="none" />
        <circle cx="23.500" cy="5.800" r="1.700" fill="#1679c6" /><circle cx="24.500" cy="10.500" r="1.700" fill="#1679c6" /><circle cx="23.500" cy="15" r="1.700" fill="#1679c6" />
        <path d="M4 19.500h10" stroke="#e8862a" strokeWidth="1.500" /><path d="M15 19.500h11" stroke="#1679c6" strokeWidth="1.500" /><circle cx="15" cy="19.500" r="1.600" fill="#fff" />
      </svg>
      <div className="ml-[25px] flex h-[50px] w-[30px] shrink-0 flex-col items-center pt-[14px]">
        <svg viewBox="0 0 30 23" className="h-[23px] w-[30px] shrink-0">
          <rect width="30" height="23" rx="1.500" fill="#3b3b3b" />
          <path d="M0 4V1.500Q0 0 1.500 0H10v4z" fill="#cfcfcf" /><path d="M10 0h10v4H10z" fill="#9d9d9d" /><path d="M20 0h8.500Q30 0 30 1.500V4H20z" fill="#6a6a6a" />
          <path d="M4 7.500l6 5.500-6 5.500" fill="none" stroke="#cfcfcf" strokeWidth="2.800" /><path d="M13 17.800h10" stroke="#fff" strokeWidth="2.500" />
        </svg>
        <span className="mt-[8px] h-1 w-[8px] shrink-0 rounded-full bg-[#9a9a9a]" />
      </div>
      <svg viewBox="0 0 14 9" className="ml-[277px] h-[9px] w-[14px] shrink-0" fill="none" stroke="#fff" strokeWidth="1.800"><path d="M1 8l6-6.500L13 8" /></svg>
      <svg viewBox="0 0 20 15" className="mt-[-2px] ml-[23px] h-[15px] w-5 shrink-0" fill="none" stroke="#f0f0f0" strokeWidth="1.400">
        <rect x=".8" y=".8" width="18.400" height="13.400" rx="2" />
        <path d="M4 4.500h12M4.800 7.500h11" strokeDasharray="1.800 1.500" strokeWidth="1.700" /><path d="M5.500 11h9" />
      </svg>
      <div className="mt-[-1px] ml-[22px] w-[32px] text-center text-[14.300px] leading-5">ENG<br />US</div>
      <svg viewBox="0 0 20 16" className="mt-[-1px] ml-[21px] h-4 w-5 shrink-0" fill="none" stroke="#fff" strokeWidth="1.600">
        <path d="M1 6C6 0 14 0 19 6" stroke="#5a5a5a" />
        <path d="M3.500 8.500c4-4.600 9-4.600 13 0M6 11.200c2.600-3 5.400-3 8 0" /><circle cx="10" cy="13.500" r="1.500" fill="#fff" stroke="none" />
      </svg>
      <svg viewBox="0 0 21 18" className="mt-[-1px] ml-[10px] h-[18px] w-[21px] shrink-0" fill="none" stroke="#fff" strokeWidth="1.400">
        <path d="M1 6.500h3.500L9 2.500v13l-4.500-4H1zM11.500 6.200c1.500 1.600 1.500 4 0 5.600M14 4c2.800 2.800 2.800 7.200 0 10" /><path d="M16.500 1.800c4.300 4 4.300 10.400 0 14.400" stroke="#b5b5b5" />
      </svg>
      <svg viewBox="0 0 21 18" className="mt-[-3px] ml-[9px] h-[18px] w-[21px] shrink-0" fill="none" stroke="#fff" strokeWidth="1.500">
        <path d="M8 4.500h8.500a2 2 0 0 1 2 2v6a2 2 0 0 1-2 2H3a2 2 0 0 1-2-2V9" /><path d="M4 12.500v-2L8.500 6.500h7.300v6z" fill="#fff" stroke="none" /><path d="M4.500 0L.5 6h3L2.500 9.500 7 4H4.500L6 0z" fill="#fff" stroke="none" /><path d="M20 7.500v4" strokeWidth="2" />
      </svg>
      <div className="mt-[-4px] mr-6 ml-auto text-right text-[14.700px] leading-5">21:33<br />08-08-2025</div>
    </div>
  );
}

export default function App() {
  return (
    <div className="flex h-[1001px] w-[1920px] flex-col overflow-hidden bg-[#3b3a3f]">
      <UrlBar />
      <BookmarkBar />
      <div className={`flex h-[876px] shrink-0 ${AWS_FONT}`}>
        <div className="flex w-[1901px] flex-col">
          <ConsoleHeader />
          <Breadcrumbs />
          <div className="flex h-[720px]">
            <Sidebar />
            <main className="flex w-[1581px] shrink-0 flex-col bg-[#fcfcfd]">
              <InstancesPanel />
              <DetailPanel />
            </main>
            <VScroll className="w-[19px] bg-[#fcfcfc] pt-[5px] pb-[6px]" thumb="mt-[6px] h-[530px]" />
          </div>
          <ConsoleFooter />
        </div>
        <VScroll className="w-[19px] bg-[#2c2c2c] pt-[6px] pb-1" thumb="mt-[7px] h-[830px]" color="text-[#9f9f9f]" />
      </div>
      <Taskbar />
    </div>
  );
}
